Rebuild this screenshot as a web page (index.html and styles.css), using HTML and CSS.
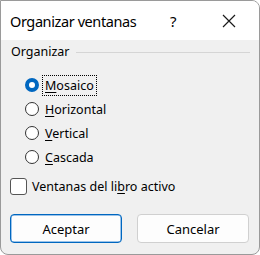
FILE: index.html
```html
<!DOCTYPE html>
<html lang="es">
<head>
    <meta charset="UTF-8">
    <title>Organizar ventanas</title>
    <link rel="stylesheet" href="styles.css">
</head>
<body>
    <div class="dialog">
        <div class="titlebar">
            <span class="title">Organizar ventanas</span>
            <span class="help">?</span>
            <svg class="close" width="14" height="14" viewBox="0 0 14 14">
                <path d="M1 1 L13 13 M13 1 L1 13" stroke="#1a1a1a" stroke-width="1.2" fill="none"/>
            </svg>
        </div>

        <div class="content">
            <div class="group-head">
                <span class="group-label">Organizar</span>
                <span class="group-line"></span>
            </div>

            <div class="options">
                <label class="option">
                    <span class="radio checked"></span>
                    <span class="text focus"><u>M</u>osaico</span>
                </label>
                <label class="option">
                    <span class="radio"></span>
                    <span class="text"><u>H</u>orizontal</span>
                </label>
                <label class="option">
                    <span class="radio"></span>
                    <span class="text"><u>V</u>ertical</span>
                </label>
                <label class="option">
                    <span class="radio"></span>
                    <span class="text"><u>C</u>ascada</span>
                </label>
            </div>

            <label class="check-row">
                <span class="checkbox"></span>
                <span class="text">Ventanas del li<u>b</u>ro activo</span>
            </label>

            <div class="buttons">
                <button class="btn primary">Aceptar</button>
                <button class="btn">Cancelar</button>
            </div>
        </div>
    </div>
</body>
</html>
```

FILE: styles.css
```css
body {
    margin: 0;
    background: #fff;
    font-family: "Noto Sans", "Open Sans", sans-serif;
    color: #000;
}

.dialog {
    width: 258px;
    height: 253px;
    border: 1px solid #9a9a9a;
    border-radius: 0 8px 8px 8px;
    background: #f0f0f0;
    overflow: hidden;
    display: flex;
    flex-direction: column;
}

.titlebar {
    height: 39px;
    background: #fff;
    display: flex;
    align-items: center;
    padding-left: 9px;
}

.title {
    font-size: 14.5px;
    width: 160px;
    letter-spacing: -0.4px;
}

.help {
    font-size: 15px;
    width: 52px;
}

.close {
    display: block;
}

.content {
    padding: 2px 9px 0 9px;
    font-size: 12.5px;
}

.group-head {
    display: flex;
    align-items: center;
    height: 18px;
}

.group-label {
    margin-left: 1px;
    margin-right: 6px;
}

.group-line {
    flex: 1;
    height: 1px;
    background: #d5d5d5;
    margin-top: 2px;
}

.options {
    padding-left: 15px;
    padding-top: 13px;
}

.option {
    display: flex;
    align-items: center;
    height: 24px;
}

.radio {
    width: 14px;
    height: 14px;
    border: 1px solid #333;
    border-radius: 50%;
    background: #fff;
    margin-right: 4px;
    box-sizing: border-box;
}

.radio.checked {
    border: 4.5px solid #0067c0;
    background: #fff;
}

.text.focus {
    outline: 1px dotted #000;
    outline-offset: 0;
    padding: 1px 2px;
}

.option .text {
    padding: 1px 2px;
}

u {
    text-underline-offset: 2px;
}

.check-row {
    display: flex;
    align-items: center;
    margin-top: 7px;
    height: 20px;
}

.checkbox {
    width: 15px;
    height: 15px;
    border: 1px solid #555;
    border-radius: 3px;
    background: #fff;
    margin-right: 5px;
}

.buttons {
    display: flex;
    justify-content: space-between;
    margin-top: 18px;
    padding-right: 1px;
}

.btn {
    width: 112px;
    height: 29px;
    font-family: inherit;
    font-size: 13px;
    background: #fdfdfd;
    border: 1px solid #d0d0d0;
    border-radius: 4px;
    color: #000;
}

.btn.primary {
    border: 1px solid #0067c0;
    box-shadow: inset 0 0 0 0.5px #3a8ad6;
}
```
